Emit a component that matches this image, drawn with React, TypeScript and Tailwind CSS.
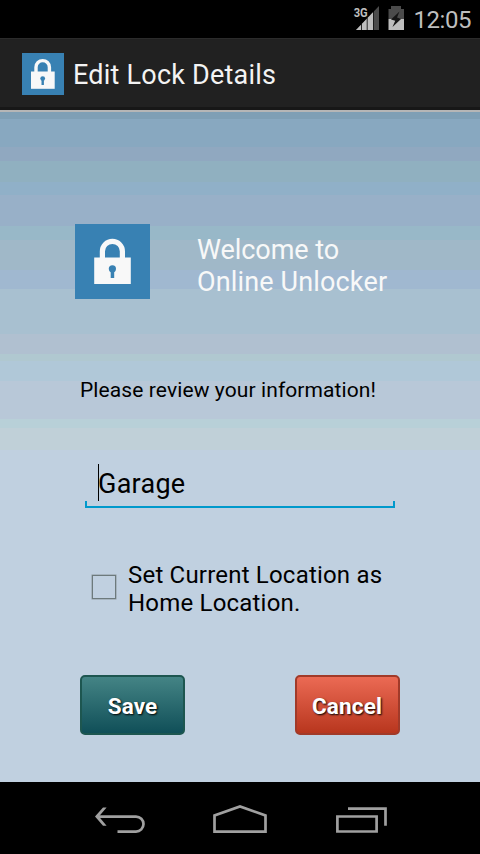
import React from "react";

const bands = [
  ["h-[7px]", "bg-[#7f9fb5]"],
  ["h-[28px]", "bg-[#88a8c0]"],
  ["h-[14px]", "bg-[#90a8c0]"],
  ["h-[21px]", "bg-[#90b0c0]"],
  ["h-[13px]", "bg-[#90b0c8]"],
  ["h-[31px]", "bg-[#98b0c8]"],
  ["h-[14px]", "bg-[#98b8c8]"],
  ["h-[30px]", "bg-[#a0b8c8]"],
  ["h-[19px]", "bg-[#a0b8d0]"],
  ["h-[45px]", "bg-[#a8c0d0]"],
  ["h-[20px]", "bg-[#b0c0d0]"],
  ["h-[7px]", "bg-[#b0c8d0]"],
  ["h-[20px]", "bg-[#b0c8d8]"],
  ["h-[38px]", "bg-[#b8c8d8]"],
  ["h-[9px]", "bg-[#b8d0d8]"],
  ["h-[22px]", "bg-[#c0d0d8]"],
  ["h-[332px]", "bg-[#c0d0e0]"],
];

function LauncherTile() {
  return (
    <svg className="ml-[22px] mt-[14px] h-[42px] w-[42px] shrink-0" viewBox="0 0 42 42">
      <rect width="42" height="42" fill="#3881b3" />
      <path d="M14 19v-4.700a6.700 6.700 0 0 1 13.400 0V19" fill="none" stroke="#f8f8f8" strokeWidth="3.400" />
      <rect x="9" y="18.500" width="23.700" height="17.300" fill="#f8f8f8" />
      <circle cx="20.700" cy="25.600" r="2.400" fill="#3881b3" />
      <rect x="19.500" y="26" width="2.400" height="6" fill="#3881b3" />
    </svg>
  );
}

function WelcomeTile() {
  return (
    <svg className="h-[75px] w-[75px] shrink-0" viewBox="0 0 75 75">
      <rect width="75" height="75" fill="#3881b3" />
      <path d="M27.400 35V27.300a10 10 0 0 1 20 0V35" fill="none" stroke="#f8f8f8" strokeWidth="5.200" />
      <rect x="19.200" y="33.500" width="36.600" height="26.500" fill="#f8f8f8" />
      <circle cx="37.400" cy="44.800" r="3.600" fill="#3881b3" />
      <rect x="35.700" y="46" width="3.500" height="8" fill="#3881b3" />
    </svg>
  );
}

function StatusBar() {
  return (
    <div className="flex h-[38px] shrink-0 bg-black text-[#bebebe]">
      <svg className="ml-[350px] h-[38px] w-[60px] shrink-0" viewBox="350 0 60 38">
        <path d="M379 6v24h-23z" fill="#4b4b4b" />
        <path d="M373.500 11.700v18.300H356z" fill="#bebebe" />
        <path d="M361.500 24v6M367.200 18v12M373.500 11v19" stroke="#000" strokeWidth="0.800" />
        <path d="M353 6h16v7l-3 5h-13z" fill="#000" />
        <text x="353.700" y="17" fill="#bebebe" fontFamily="Roboto, sans-serif" fontSize="13" fontWeight="700" textLength="14" lengthAdjust="spacingAndGlyphs">3G</text>
        <path d="M391 6h10v3h3v10h-15.500V9h2.500z" fill="#4b4b4b" />
        <path d="M388.500 19H404v11h-15.500z" fill="#bebebe" />
        <path d="M399.500 11.500l-8.500 8 4.200 1.300-2.700 6.200 8.500-8-4-1.500z" fill="#151515" />
      </svg>
      <span className="ml-[3.500px] mt-[5px] whitespace-nowrap text-[24px] leading-[30px] tracking-[-0.450px]">12:05</span>
    </div>
  );
}

export default function App() {
  return (
    <div className="flex h-[854px] w-[480px] flex-col overflow-hidden bg-black font-[Roboto,'Noto_Sans',sans-serif]">
      <StatusBar />
      <header className="flex h-[72px] shrink-0 items-start border-b-[3px] border-t border-b-[#171717] border-t-[#2b2b2b] bg-[#212121]">
        <LauncherTile />
        <h1 className="ml-[9px] mt-[20px] whitespace-nowrap text-[27px] leading-[32px] tracking-[0.220px] text-[#f3f3f3]">Edit Lock Details</h1>
      </header>
      <div className="h-[2px] shrink-0 bg-[#b6b6b6]" />
      <main className="relative h-[670px] shrink-0 overflow-hidden">
        <div className="absolute inset-0">
          {bands.map(([height, color]) => (
            <div key={color} className={`${height} ${color}`} />
          ))}
        </div>
        <div className="relative flex flex-col">
          <div className="mt-[112px] flex h-[76px] items-start pl-[75px]">
            <WelcomeTile />
            <p className="ml-[47px] mt-[10px] whitespace-nowrap text-[27px] leading-[32px] tracking-[0.150px] text-[#f8f8f8]">
              <span className="tracking-[-0.050px]">Welcome to</span>
              <br />
              Online Unlocker
            </p>
          </div>
          <p className="ml-[80px] mt-[78px] whitespace-nowrap text-[21px] leading-[25px] tracking-[0.100px] text-black">Please review your information!</p>
          <div className="ml-[85px] mt-[61px] w-[310px]">
            <div className="flex h-[37px] items-start pl-[13px]">
              <span className="h-[37px] w-px bg-black" />
              <span className="-ml-px mt-[4px] text-[27px] leading-[32px] tracking-[0.250px] text-black">Garage</span>
            </div>
            <div className="h-[7px] border-x-2 border-b-2 border-[#0099cc]" />
          </div>
          <div className="mt-[53px] flex h-[56px] items-start">
            <span className="ml-[92px] mt-[14px] h-[24px] w-[24px] shrink-0 border border-[#6d7a7c] shadow-[0_0_0_0.500px_#8d999e]" />
            <p className="ml-[12px] whitespace-nowrap text-[24px] leading-[28px] tracking-[0.200px] text-black">
              Set Current Location as
              <br />
              Home Location.
            </p>
          </div>
          <div className="ml-[80px] mt-[58px] flex w-[320px] justify-between text-[22.500px] font-bold text-white">
            <button className="h-[60px] w-[105px] rounded-[5px] border-2 border-[#1d5650] bg-[linear-gradient(#448485,#104f58)] [text-shadow:1px_1px_2px_#000]">
              <span className="relative top-[2px] tracking-[0.150px]">Save</span>
            </button>
            <button className="h-[60px] w-[105px] rounded-[5px] border-2 border-[#a13a29] bg-[linear-gradient(#eb6a54,#b8361e)] [text-shadow:1px_1px_2px_#000]">
              <span className="relative -left-[0.500px] top-[2px] tracking-[0.150px]">Cancel</span>
            </button>
          </div>
        </div>
      </main>
      <nav className="flex h-[72px] shrink-0">
        <svg className="h-[72px] w-[480px]" viewBox="0 782 480 72" fill="none" stroke="#a0a0a0" strokeWidth="2.700">
          <path d="M96.800 816.600H136a7.400 7.400 0 0 1 0 15h-18.500" />
          <path d="M103 807.500h3.600l-7.700 9.100 7.700 9.200H103l-8-9.200z" fill="#a0a0a0" stroke="none" />
          <path d="M214.500 831.600v-16.200l25.500-8.900 25.500 8.900v16.200z" />
          <path d="M337.400 816.500h39.200v15h-39.200zM348 808.700h37.500v17" />
        </svg>
      </nav>
    </div>
  );
}
